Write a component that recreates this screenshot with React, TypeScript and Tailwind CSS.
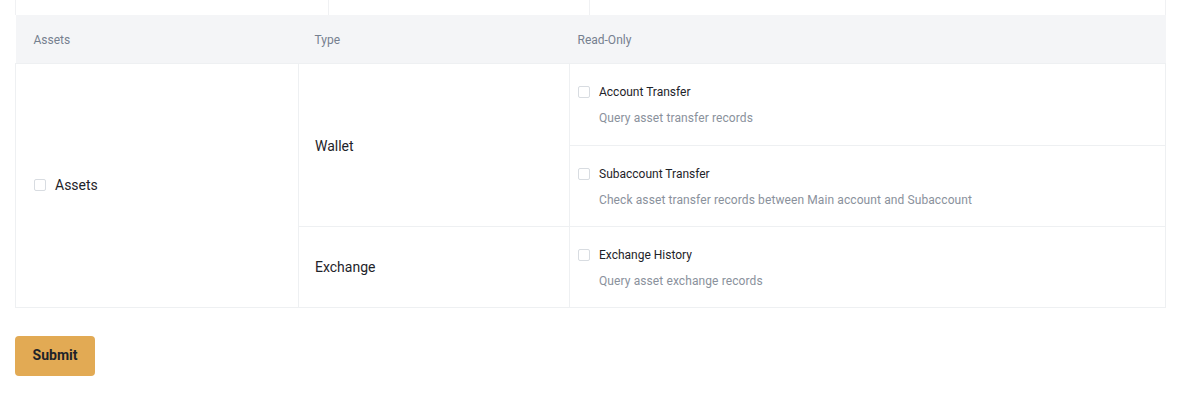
import { useState } from 'react';

type Perm = { key: string; title: string; desc: string };

const wallet: Perm[] = [
  { key: 'accountTransfer', title: 'Account Transfer', desc: 'Query asset transfer records' },
  { key: 'subTransfer', title: 'Subaccount Transfer', desc: 'Check asset transfer records between Main account and Subaccount' },
];

const exchange: Perm[] = [
  { key: 'exchangeHistory', title: 'Exchange History', desc: 'Query asset exchange records' },
];

function Box({ checked, onClick }: { checked: boolean; onClick: () => void }) {
  return (
    <button
      type="button"
      onClick={onClick}
      className={`h-[12px] w-[12px] shrink-0 rounded-[2px] border ${checked ? 'border-[#e2aa54] bg-[#e2aa54]' : 'border-[#d8dce1] bg-white'}`}
    />
  );
}

export default function App() {
  const [checked, setChecked] = useState<Record<string, boolean>>({});
  const toggle = (k: string) => setChecked((c) => ({ ...c, [k]: !c[k] }));

  const permCell = (p: Perm, first = false, last = false) => (
    <td className={`${first ? 'h-[82px]' : 'h-[81px]'} border-l border-[#eef0f2] px-[8px] align-top ${last ? '' : 'border-b'}`}>
      <div className="flex items-center gap-[9px] pt-[20px]">
        <Box checked={!!checked[p.key]} onClick={() => toggle(p.key)} />
        <span className="text-[12px] leading-[16px] text-[#1e2329]">{p.title}</span>
      </div>
      <p className="mt-[10px] pl-[21px] text-[12px] leading-[16px] tracking-[0.1px] text-[#8a919c]">{p.desc}</p>
    </td>
  );

  return (
    <div className="min-h-screen bg-white font-['Roboto',sans-serif]">
      <div className="px-[15px]">
        <div className="grid h-[15px] w-[1151px] grid-cols-[313px_261px_1fr] border-x border-[#f0f1f3]">
          <div className="border-r border-[#f0f1f3]" />
          <div className="border-r border-[#f0f1f3]" />
          <div />
        </div>

        <table className="w-[1151px] table-fixed border-collapse">
          <colgroup>
            <col className="w-[283px]" />
            <col className="w-[271px]" />
            <col />
          </colgroup>
          <thead>
            <tr className="h-[48px] bg-[#f4f5f7] text-left text-[12px] font-normal text-[#76808f]">
              <th className="pl-[18px] pt-[2px] font-normal">Assets</th>
              <th className="pl-[16px] pt-[2px] font-normal">Type</th>
              <th className="pl-[8px] pt-[2px] font-normal">Read-Only</th>
            </tr>
          </thead>
          <tbody className="border border-[#eef0f2]">
            <tr>
              <td rowSpan={3} className="border-r border-[#eef0f2] pl-[18px]">
                <div className="flex items-center gap-[9px] text-[14px] text-[#1e2329]">
                  <Box checked={!!checked.assets} onClick={() => toggle('assets')} />
                  Assets
                </div>
              </td>
              <td rowSpan={2} className="border-b border-[#eef0f2] pl-[16px] pt-[3px] text-[14px] text-[#1e2329]">
                Wallet
              </td>
              {permCell(wallet[0], true)}
            </tr>
            <tr>{permCell(wallet[1])}</tr>
            <tr>
              <td className="pl-[16px] pt-[2px] text-[14px] text-[#1e2329]">Exchange</td>
              {permCell(exchange[0], false, true)}
            </tr>
          </tbody>
        </table>

        <button
          type="button"
          className="mt-[28px] h-[40px] w-[80px] rounded-[4px] bg-[#e2aa54] text-[14px] font-bold text-[#1e2329]"
        >
          Submit
        </button>
      </div>
    </div>
  );
}
